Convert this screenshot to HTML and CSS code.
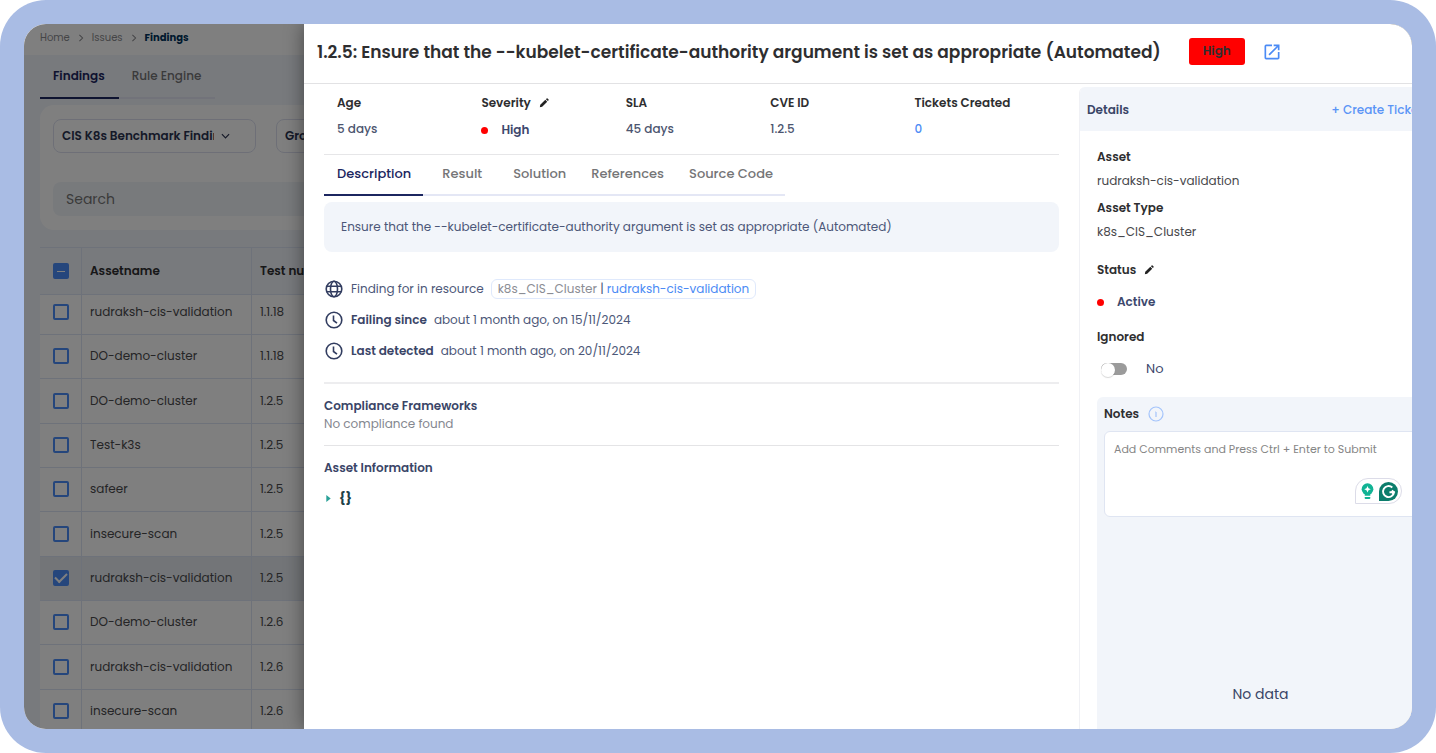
FILE: index.html
```html
<!DOCTYPE html>
<html lang="en">
<head>
<meta charset="utf-8">
<meta name="viewport" content="width=device-width, initial-scale=1">
<title>Findings</title>
<link rel="stylesheet" href="styles.css">
</head>
<body>
<div class="frame">
<div class="app">
  <div class="page">
    <nav class="crumbs" aria-label="Breadcrumb">
      <a href="#">Home</a>
      <svg class="crumb-sep" viewBox="0 0 6 10"><path d="M1 1l4 4-4 4"/></svg>
      <a href="#">Issues</a>
      <svg class="crumb-sep" viewBox="0 0 6 10"><path d="M1 1l4 4-4 4"/></svg>
      <a href="#" class="current">Findings</a>
    </nav>
    <div class="page-body">
      <div class="tabs page-tabs">
        <button class="tab active">Findings</button>
        <button class="tab">Rule Engine</button>
      </div>
      <section class="filters">
        <div class="filter-row">
          <button class="picker"><span class="picker-text">CIS K8s Benchmark Findings</span>
            <svg class="chevron" viewBox="0 0 10 6"><path d="M1 1l4 4 4-4"/></svg></button>
          <button class="picker"><span class="picker-text">Group</span></button>
        </div>
        <input class="search" type="text" placeholder="Search" aria-label="Search">
      </section>
      <table class="findings">
        <thead>
          <tr><th class="check"><input type="checkbox" class="box some" aria-label="Select all"></th><th class="asset">Assetname</th><th>Test number</th></tr>
        </thead>
        <tbody>
          <tr><td class="check"><input type="checkbox" class="box" aria-label="Select row 1"></td><td>rudraksh-cis-validation</td><td>1.1.18</td></tr>
          <tr><td class="check"><input type="checkbox" class="box" aria-label="Select row 2"></td><td>DO-demo-cluster</td><td>1.1.18</td></tr>
          <tr><td class="check"><input type="checkbox" class="box" aria-label="Select row 3"></td><td>DO-demo-cluster</td><td>1.2.5</td></tr>
          <tr><td class="check"><input type="checkbox" class="box" aria-label="Select row 4"></td><td>Test-k3s</td><td>1.2.5</td></tr>
          <tr><td class="check"><input type="checkbox" class="box" aria-label="Select row 5"></td><td>safeer</td><td>1.2.5</td></tr>
          <tr><td class="check"><input type="checkbox" class="box" aria-label="Select row 6"></td><td>insecure-scan</td><td>1.2.5</td></tr>
          <tr class="selected"><td class="check"><input type="checkbox" class="box" checked aria-label="Select row 7"></td><td>rudraksh-cis-validation</td><td>1.2.5</td></tr>
          <tr><td class="check"><input type="checkbox" class="box" aria-label="Select row 8"></td><td>DO-demo-cluster</td><td>1.2.6</td></tr>
          <tr><td class="check"><input type="checkbox" class="box" aria-label="Select row 9"></td><td>rudraksh-cis-validation</td><td>1.2.6</td></tr>
          <tr><td class="check"><input type="checkbox" class="box" aria-label="Select row 10"></td><td>insecure-scan</td><td>1.2.6</td></tr>
        </tbody>
      </table>
    </div>
  </div>
  <div class="backdrop"></div>
  <aside class="drawer">
    <header class="drawer-head">
      <h1>1.2.5: Ensure that the --kubelet-certificate-authority argument is set as appropriate (Automated)</h1>
      <span class="badge">High</span>
      <a href="#" class="open" aria-label="Open in new tab">
        <svg viewBox="0 0 24 24"><path d="M19 19H5V5h7V3H5a2 2 0 0 0-2 2v14a2 2 0 0 0 2 2h14c1.100 0 2-.9 2-2v-7h-2v7zM14 3v2h3.590l-9.830 9.830 1.410 1.410L19 6.410V10h2V3h-7z"/></svg>
      </a>
    </header>
    <div class="drawer-body">
      <main class="main">
        <dl class="stats">
          <div><dt>Age</dt><dd>5 days</dd></div>
          <div><dt>Severity <button class="edit" aria-label="Edit severity"><svg viewBox="0 0 12 12"><path d="M1 11l.5-2.800L7.600 2.100l2.300 2.300-6.100 6.100zM8.300 1.400l.9-.9c.3-.3.700-.3 1 0l1.300 1.300c.3.3.3.700 0 1l-.9.900z"/></svg></button></dt><dd class="level">High</dd></div>
          <div><dt>SLA</dt><dd>45 days</dd></div>
          <div><dt>CVE ID</dt><dd>1.2.5</dd></div>
          <div><dt>Tickets Created</dt><dd><a href="#">0</a></dd></div>
        </dl>
        <div class="tabs">
          <button class="tab active">Description</button>
          <button class="tab">Result</button>
          <button class="tab">Solution</button>
          <button class="tab">References</button>
          <button class="tab">Source Code</button>
        </div>
        <p class="description">Ensure that the --kubelet-certificate-authority argument is set as appropriate (Automated)</p>
        <ul class="facts">
          <li>
            <svg class="fact-icon" viewBox="0 0 20 20"><circle cx="10" cy="10" r="7.800"/><ellipse cx="10" cy="10" rx="3.500" ry="7.800"/><path d="M2.800 7.300h14.400M2.800 12.700h14.400"/></svg>
            <span>Finding for in resource</span>
            <span class="chip"><span class="muted">k8s_CIS_Cluster</span> | <a href="#">rudraksh-cis-validation</a></span>
          </li>
          <li>
            <svg class="fact-icon" viewBox="0 0 20 20"><circle cx="10" cy="10" r="7.800"/><path d="M9.500 5.500v5l3.500 2.700"/></svg>
            <strong>Failing since</strong><span>about 1 month ago, on 15/11/2024</span>
          </li>
          <li>
            <svg class="fact-icon" viewBox="0 0 20 20"><circle cx="10" cy="10" r="7.800"/><path d="M9.500 5.500v5l3.500 2.700"/></svg>
            <strong>Last detected</strong><span>about 1 month ago, on 20/11/2024</span>
          </li>
        </ul>
        <section class="block">
          <h2>Compliance Frameworks</h2>
          <p>No compliance found</p>
        </section>
        <section class="block">
          <h2>Asset Information</h2>
          <button class="json"><svg viewBox="0 0 5 8"><path d="M0 0l5 4-5 4z"/></svg>{}</button>
        </section>
      </main>
      <section class="details">
        <header class="details-head"><h2>Details</h2><button class="create">+ Create Ticket</button></header>
        <div class="details-body">
          <dl class="fields">
            <dt>Asset</dt><dd>rudraksh-cis-validation</dd>
            <dt>Asset Type</dt><dd>k8s_CIS_Cluster</dd>
          </dl>
          <dl class="fields spaced">
            <dt>Status <button class="edit" aria-label="Edit status"><svg viewBox="0 0 12 12"><path d="M1 11l.5-2.800L7.600 2.100l2.300 2.300-6.100 6.100zM8.300 1.400l.9-.9c.3-.3.700-.3 1 0l1.300 1.300c.3.3.3.700 0 1l-.9.900z"/></svg></button></dt><dd class="level">Active</dd>
            <dt>Ignored</dt><dd><label class="switch"><input type="checkbox" role="switch">No</label></dd>
          </dl>
          <section class="notes">
            <label class="notes-title" for="note">Notes
              <svg class="info" viewBox="0 0 16 16"><circle cx="8" cy="8" r="7"/><path d="M8 6v5M7.300 6H8"/></svg></label>
            <div class="note-wrap">
              <textarea id="note" placeholder="Add Comments and Press Ctrl + Enter to Submit"></textarea>
              <div class="assist">
                <svg viewBox="0 0 14 18"><circle class="bulb" cx="7" cy="6.500" r="6.300"/><path class="bulb" d="M4 11h6v2.500H4zM4 15h6v1.200q0 .8-1 .8H5q-1 0-1-.8z"/><path class="spark" d="M7 3l1.100 2.400L10.500 6.500 8.100 7.600 7 10 5.900 7.600 3.500 6.500l2.400-1.100z"/></svg>
                <svg class="g" viewBox="0 0 20 20"><path class="disc" d="M10 0a10 10 0 0 1 0 20H0V10A10 10 0 0 1 10 0z"/><path class="ring" d="M14 5.800A5.800 5.800 0 1 0 15.800 10.800H11M13.500 9l2.300 1.800-1.600 2.600"/></svg>
              </div>
            </div>
            <p class="empty">No data</p>
          </section>
        </div>
      </section>
    </div>
  </aside>
</div>
</div>
</body>
</html>
```
FILE: styles.css
```css
* { box-sizing: border-box; }
body { margin: 0; background: #fff; color: #2e2e30; font: 12px/18px Poppins, Inter, "Open Sans", sans-serif; }
h1, h2, p, dl, dd, ul { margin: 0; padding: 0; }
button, input, textarea { font: inherit; color: inherit; }
button { background: none; border: 0; padding: 0; cursor: pointer; }
a { color: #4b8bf5; text-decoration: none; }
svg { display: block; flex: none; }

.frame { height: 100vh; padding: 24px; background: #a9bce4; border-radius: 46px; }
.app { display: grid; grid-template: minmax(0, 1fr) / minmax(0, 1fr); height: 100%; overflow: hidden; border-radius: 22px; background: #fff; }
.page, .backdrop, .drawer { grid-area: 1 / 1; min-height: 0; }
.page { overflow: hidden; background: #f1f4fb; }
.backdrop { background: rgba(0, 0, 0, .5); z-index: 1; }

.crumbs { display: flex; align-items: center; gap: 8px; height: 31px; padding: 0 16px 4px; background: #fff; font-size: 10px; }
.crumbs a { color: #8a8a8e; }
.crumbs .current { color: #00335c; font-weight: 700; }
.crumb-sep { width: 6px; height: 8px; fill: none; stroke: #8a8a8e; stroke-width: 1.300; }
.page-body { padding-left: 16px; }

.tabs { display: flex; width: max-content; }
.tab { min-width: 77px; height: 41px; padding: 0 12px 2px 13px; border-bottom: 2px solid #e4e7f5; color: #757577; font-size: 13px; font-weight: 500; }
.tab.active { color: #1c2660; border-color: #1c2660; }
.page-tabs .tab { height: 44px; padding: 0 14px 0 13px; font-size: 12px; }
.page-tabs .active { font-weight: 600; }

.filters { margin-top: 6px; padding: 14px 13px; border-radius: 14px; background: #fff; }
.filter-row { display: flex; gap: 20px; }
.picker { display: flex; flex: none; align-items: center; gap: 7px; width: 203px; height: 34px; padding: 0 8px; border: 1px solid #dcdfee; border-radius: 8px; color: #2b3350; font-weight: 600; }
.picker-text { width: 152px; overflow: hidden; white-space: nowrap; text-align: left; }
.chevron { width: 9px; height: 6px; fill: none; stroke: #2b3350; stroke-width: 1.300; }
.search { width: 100%; height: 34px; margin-top: 29px; padding: 0 13px; border: 0; border-radius: 8px; background: #f1f4f9; font-size: 14px; }
.search::placeholder { color: #757575; opacity: 1; }

.findings { width: 100%; margin-top: 17px; table-layout: fixed; border-collapse: separate; border-spacing: 0; background: #fff; }
.findings th, .findings td { height: 44px; padding: 0 8px; border-bottom: 1px solid #dde5f5; border-left: 1px solid #dde5f5; text-align: left; white-space: nowrap; }
.findings td { padding-bottom: 1px; color: #4a4a4d; }
.findings th { height: 48px; border-top: 1px solid #dde5f5; background: #f1f4fb; font-weight: 600; }
.findings tbody tr:first-child td { height: 40px; padding-bottom: 5px; }
.findings tbody tr:nth-child(3n) td { height: 45px; }
.findings .check { width: 41px; padding-left: 13px; padding-right: 0; border-left: 0; }
.findings .asset { width: 170px; }
.findings .selected td { background: #e6eaf0; }
.box { display: block; width: 16px; height: 16px; margin: 0; appearance: none; border: 2px solid #4a8cf8; border-radius: 2px; }
.box.some, .box:checked { display: grid; place-items: center; background: #4a8cf8; }
.box.some::before { content: ""; width: 8px; height: 1px; background: #fff; }
.box:checked::before { content: ""; width: 10px; height: 5px; margin-top: -3px; border: solid #fff; border-width: 0 0 2px 2px; transform: rotate(-45deg); }

.drawer { z-index: 2; display: flex; flex-direction: column; margin-left: 280px; overflow: hidden; background: #fff; box-shadow: 0 0 18px rgba(0, 0, 0, .45); }
.drawer-head { display: flex; flex: none; align-items: center; gap: 17px; height: 60px; padding: 0 13px 4px; border-bottom: 1px solid #e2e2e4; white-space: nowrap; }
h1 { margin-right: 11px; font-size: 17px; line-height: 28px; font-weight: 600; }
.badge { padding: 4px 14px 5px; border-radius: 3px; background: #f00; font-weight: 600; }
.open svg { width: 20px; height: 20px; fill: #4b8bf5; }
.drawer-body { display: flex; flex: 1; min-height: 0; gap: 20px; margin-right: -24px; padding-left: 20px; }
.main { flex: 1; min-width: 0; }

.stats { display: grid; grid-template-columns: repeat(5, 1fr); height: 71px; padding: 10px 0 0 13px; border-bottom: 1px solid #e6e6e8; }
dt { display: flex; align-items: center; gap: 8px; font-weight: 600; }
.stats dd { margin-top: 8px; color: #4c556f; font-weight: 500; }
.level { display: flex; align-items: center; gap: 13px; }
.stats .level { padding-top: 1px; }
.stats .level, .fields .level { font-weight: 600; color: #3d486d; }
.level::before { content: ""; width: 7px; height: 7px; border-radius: 50%; background: #f00; }
.edit svg { width: 10px; height: 10px; fill: #222; }

.description { margin-top: 6px; padding: 16px 17px; border-radius: 8px; background: #f2f5fa; color: #4c5778; }
.facts { display: grid; gap: 9px; padding: 26px 0 20px; border-bottom: 2px solid #ededef; color: #4c5778; list-style: none; }
.facts li { display: flex; align-items: center; gap: 7px; height: 22px; }
.fact-icon { width: 20px; height: 20px; fill: none; stroke: #323d60; stroke-width: 1.600; }
.facts strong { color: #3a4567; font-weight: 600; }
.chip { padding: 0 6px; border: 1px solid #dfe9fc; border-radius: 6px; }
.muted { color: #8b8d94; }
.block { padding: 13px 0; border-bottom: 1px solid #e4e4e6; color: #84878f; }
.block:last-child { border: 0; }
h2 { font-size: 12px; line-height: 18px; font-weight: 600; color: #3a4567; }
.block p { line-height: 17px; }
.json { display: flex; align-items: center; gap: 8px; margin-top: 12px; padding-left: 2px; color: #1d4048; font-size: 13px; font-weight: 700; }
.json svg { width: 5px; height: 7px; fill: #2aa198; }

.details { display: flex; flex: 0 0 357px; flex-direction: column; margin-top: 3px; border-left: 1px solid #f0f1f5; border-radius: 6px 0 0 0; overflow: hidden; white-space: nowrap; }
.details-head { display: flex; justify-content: space-between; align-items: center; height: 44px; padding: 1px 13px 0 7px; background: #f2f5fa; }
.create { color: #5a94f6; font-weight: 500; }
.details-body { display: flex; flex: 1; flex-direction: column; padding: 17px 12px 0 17px; }
.fields { display: grid; gap: 6px; }
.fields dd { color: #48484b; }
.fields dd + dt { margin-top: 3px; }
.spaced { gap: 14px; margin-top: 20px; }
.fields .switch { display: flex; align-items: center; gap: 19px; color: #3d486d; font-size: 13px; }
.switch input { display: grid; align-items: center; width: 26px; height: 12px; margin: 0 0 0 4px; appearance: none; border-radius: 6px; background: #9b9b9b; }
.switch input::before { content: ""; width: 14px; height: 14px; border-radius: 50%; background: #fff; box-shadow: 0 1px 1px rgba(0, 0, 0, .16); }

.notes { flex: 1; display: flex; flex-direction: column; margin-top: 19px; padding: 8px 0 8px 7px; border-radius: 6px 6px 0 0; background: #f2f5fa; }
.notes-title { display: flex; align-items: center; gap: 9px; font-weight: 600; }
.info { width: 16px; height: 16px; fill: none; stroke: #a4c4fb; stroke-width: 1.200; }
.note-wrap { position: relative; margin-top: 8px; }
textarea { display: block; width: 100%; height: 86px; padding: 8px 9px; border: 1px solid #dfe5f2; border-radius: 6px; background: #fff; font-size: 11px; resize: none; }
textarea::placeholder { color: #858585; opacity: 1; }
.assist { position: absolute; right: 22px; bottom: 13px; display: flex; align-items: center; gap: 5px; width: 47px; height: 26px; padding: 0 6px 0 5px; border: 1px solid #dcdce8; border-radius: 13px 13px 13px 0; background: #fff; }
.assist svg { width: 13px; height: 17px; }
.assist .g { width: 19px; height: 19px; }
.bulb { fill: #11b394; }
.spark { fill: #fff; }
.disc { fill: #0b7d6c; }
.ring { fill: none; stroke: #fff; stroke-width: 2; }
.empty { margin: auto 7px 18px 0; color: #3a4567; font-size: 14px; text-align: center; }
```
